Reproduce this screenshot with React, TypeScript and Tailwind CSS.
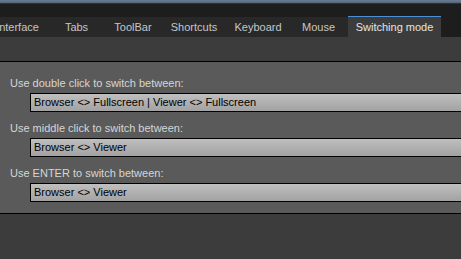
const tabs = [
  { label: "Interface", width: "w-[61px]" },
  { label: "Tabs", width: "w-[57px]" },
  { label: "ToolBar", width: "w-[56px]" },
  { label: "Shortcuts", width: "w-[66px]" },
  { label: "Keyboard", width: "w-[62px]" },
  { label: "Mouse", width: "w-[59px]" },
];

const rows = [
  { label: "Use double click to switch between:", value: "Browser <> Fullscreen | Viewer <> Fullscreen" },
  { label: "Use middle click to switch between:", value: "Browser <> Viewer" },
  { label: "Use ENTER to switch between:", value: "Browser <> Viewer" },
];

export default function App() {
  return (
    <div className="h-[259px] w-[461px] overflow-hidden bg-[#3c3c3c] font-['Liberation_Sans',Arial,sans-serif] text-[11px]">
      {/* window chrome */}
      <div className="h-[3px] bg-gradient-to-b from-[#6a7c8f] to-[#55667a]" />
      <div className="h-px bg-[#2c3136]" />
      <div className="h-[12px] bg-[#1d1d1d]" />

      {/* tab strip */}
      <div className="flex h-[21px] items-end bg-[#1d1d1d]">
        <div className="-ml-[13px] flex h-[20px] bg-[#282828]">
          {tabs.map((tab) => (
            <div key={tab.label} className={`${tab.width} flex items-center justify-center text-[#c6c6c6]`}>
              {tab.label}
            </div>
          ))}
        </div>
        <div className="flex h-[21px] w-[93px] items-center justify-center border-t border-[#4b8fd4] bg-[#3c3c3c] text-[#e4e4e4]">
          Switching mode
        </div>
      </div>

      <div className="h-[24px]" />

      {/* settings panel */}
      <div className="border-y border-black bg-[#5a5a5a] pt-[5px] pb-[11px]">
        {rows.map((row) => (
          <div key={row.label}>
            <div className="h-[26px] px-[10px] pt-[5px] leading-[22px] text-[#d6d6d6]">{row.label}</div>
            <div className="ml-[30px] flex h-[19px] w-[460px] items-center border border-black bg-gradient-to-b from-[#bfbfbf] to-[#a2a2a2] px-[3px] text-black">
              {row.value}
            </div>
          </div>
        ))}
      </div>
    </div>
  );
}
